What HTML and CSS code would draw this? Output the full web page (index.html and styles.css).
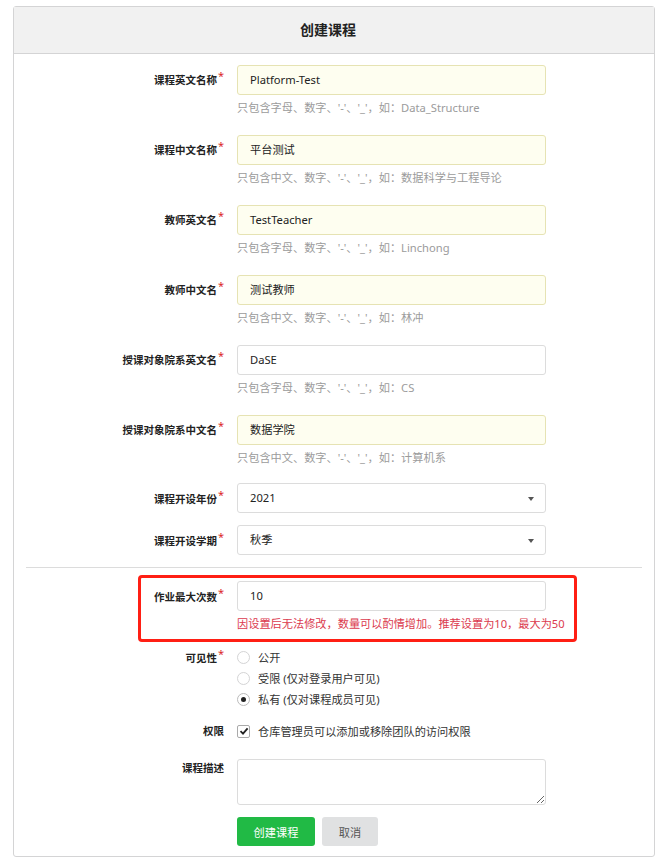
FILE: index.html
```html
<!DOCTYPE html>
<html lang="zh-CN">
<head>
    <meta charset="UTF-8">
    <meta name="viewport" content="width=device-width, initial-scale=1.0">
    <title>创建课程</title>
    <link rel="stylesheet" href="styles.css">
</head>
<body>

<div class="card">
    <h3 class="card-header">创建课程</h3>

    <form class="form">
        <div class="field">
            <label class="required">课程英文名称</label>
            <div class="input filled">Platform-Test</div>
            <div class="help">只包含字母、数字、'-'、'_'，如：Data_Structure</div>
        </div>

        <div class="field">
            <label class="required">课程中文名称</label>
            <div class="input filled">平台测试</div>
            <div class="help">只包含中文、数字、'-'、'_'，如：数据科学与工程导论</div>
        </div>

        <div class="field">
            <label class="required">教师英文名</label>
            <div class="input filled">TestTeacher</div>
            <div class="help">只包含字母、数字、'-'、'_'，如：Linchong</div>
        </div>

        <div class="field">
            <label class="required">教师中文名</label>
            <div class="input filled">测试教师</div>
            <div class="help">只包含中文、数字、'-'、'_'，如：林冲</div>
        </div>

        <div class="field">
            <label class="required">授课对象院系英文名</label>
            <div class="input">DaSE</div>
            <div class="help">只包含字母、数字、'-'、'_'，如：CS</div>
        </div>

        <div class="field">
            <label class="required">授课对象院系中文名</label>
            <div class="input filled">数据学院</div>
            <div class="help">只包含中文、数字、'-'、'_'，如：计算机系</div>
        </div>

        <div class="field select-field">
            <label class="required">课程开设年份</label>
            <div class="input dropdown">2021</div>
        </div>

        <div class="field select-field">
            <label class="required">课程开设学期</label>
            <div class="input dropdown">秋季</div>
        </div>

        <div class="divider"></div>

        <div class="field marked">
            <label class="required">作业最大次数</label>
            <div class="input">10</div>
            <div class="help error">因设置后无法修改，数量可以酌情增加。推荐设置为10，最大为50</div>
        </div>

        <div class="field radio-field">
            <label class="required">可见性</label>
            <div class="options">
                <div class="radio"><span class="dot"></span>公开</div>
                <div class="radio"><span class="dot"></span>受限 (仅对登录用户可见)</div>
                <div class="radio checked"><span class="dot"></span>私有 (仅对课程成员可见)</div>
            </div>
        </div>

        <div class="field check-field">
            <label>权限</label>
            <div class="checkbox">
                <span class="box">
                    <svg width="10" height="10" viewBox="0 0 10 10"><path d="M1.5 5.2 L4 7.6 L8.6 2.4" fill="none" stroke="#222" stroke-width="1.8"/></svg>
                </span>
                仓库管理员可以添加或移除团队的访问权限
            </div>
        </div>

        <div class="field text-field">
            <label>课程描述</label>
            <textarea class="textarea"></textarea>
        </div>

        <div class="field buttons">
            <div class="actions">
                <button type="button" class="button green">创建课程</button>
                <button type="button" class="button grey">取消</button>
            </div>
        </div>
    </form>
</div>

</body>
</html>
```

FILE: styles.css
```css
body {
    margin: 0;
    background-color: #ffffff;
    font-family: "Noto Sans", "Noto Sans CJK SC", sans-serif;
    color: #222;
}

.card {
    margin: 6px 13px 0 13px;
    width: 640px;
    border: 1px solid #d4d4d5;
    border-radius: 3px;
}

.card-header {
    margin: 0;
    height: 46px;
    line-height: 46px;
    text-align: center;
    font-size: 14px;
    font-weight: bold;
    color: #222;
    background-color: #f1f1f1;
    border-bottom: 1px solid #d4d4d5;
    padding-right: 12px;
}

.form {
    padding: 10.5px 0 10px 0;
}

.field {
    display: grid;
    grid-template-columns: 210px 309px;
    column-gap: 13px;
    align-items: center;
    margin-bottom: 19px;
    position: relative;
}

.field label {
    text-align: right;
    font-size: 10.5px;
    font-weight: bold;
    color: #222;
}

.required::after {
    content: "*";
    color: #db2828;
    font-weight: normal;
    font-size: 11px;
    margin-left: 1px;
    position: relative;
    top: -4px;
}

.input {
    box-sizing: border-box;
    height: 30px;
    line-height: 28px;
    padding: 0 12px;
    font-size: 11.2px;
    border: 1px solid #dcdcdc;
    border-radius: 3px;
    background-color: #fff;
    color: #222;
}

.input.filled {
    background-color: #fefef0;
    border-color: #e6e3b3;
}

.help {
    grid-column: 2;
    margin-top: 5px;
    line-height: 16px;
    font-size: 11.2px;
    color: #9b9b9b;
    white-space: nowrap;
}

.help.error {
    color: #db3a4e;
}

.select-field {
    margin-bottom: 12px;
}

.field:nth-of-type(6) {
    margin-bottom: 17.5px;
}

.dropdown {
    position: relative;
}

.dropdown::after {
    content: "";
    position: absolute;
    right: 11px;
    top: 13px;
    border-left: 3.5px solid transparent;
    border-right: 3.5px solid transparent;
    border-top: 4px solid #555;
}

.divider {
    margin: 0 12px 13px 12px;
    border-top: 1px solid #dcdcdc;
}

/* red annotation frame around the field */
.marked {
    margin-bottom: 14.5px;
}

.marked::after {
    content: "";
    position: absolute;
    left: 124px;
    right: 77px;
    top: -6px;
    bottom: -10px;
    border: 3px solid #ff1f14;
    border-radius: 4px;
    pointer-events: none;
}

.radio-field {
    align-items: start;
    margin-bottom: 11.5px;
}

.radio-field label {
    line-height: 21px;
}

.radio {
    display: flex;
    align-items: center;
    height: 21px;
    font-size: 11.2px;
    color: #333;
}

.dot {
    box-sizing: border-box;
    width: 13px;
    height: 13px;
    border: 1px solid #d4d4d5;
    border-radius: 50%;
    margin-right: 8px;
    position: relative;
}

.radio.checked .dot {
    border-color: #bbb;
}

.radio.checked .dot::after {
    content: "";
    position: absolute;
    left: 3px;
    top: 3px;
    width: 5px;
    height: 5px;
    border-radius: 50%;
    background-color: #222;
}

.check-field {
    margin-bottom: 18px;
}

.check-field label {
    line-height: 20px;
}

.checkbox {
    display: flex;
    align-items: center;
    height: 20px;
    font-size: 11.2px;
    color: #333;
}

.box {
    box-sizing: border-box;
    width: 13px;
    height: 13px;
    border: 1px solid #aaa;
    border-radius: 2px;
    margin-right: 8px;
    display: flex;
    align-items: center;
    justify-content: center;
}

.text-field {
    align-items: start;
    margin-bottom: 12px;
}

.text-field label {
    margin-top: 1px;
    line-height: 16px;
}

.textarea {
    box-sizing: border-box;
    display: block;
    width: 309px;
    height: 46px;
    border: 1px solid #dcdcdc;
    border-radius: 3px;
    resize: vertical;
    margin: 0;
}

.buttons {
    margin-bottom: 0;
}

.actions {
    grid-column: 2;
    display: flex;
    gap: 7px;
}

.button {
    height: 29px;
    border: none;
    border-radius: 3px;
    font-family: inherit;
    font-size: 11.2px;
    padding: 0;
    cursor: pointer;
}

.button.green {
    width: 78px;
    background-color: #21ba45;
    color: #fff;
}

.button.grey {
    width: 56px;
    background-color: #e0e1e2;
    color: #555;
}
```
